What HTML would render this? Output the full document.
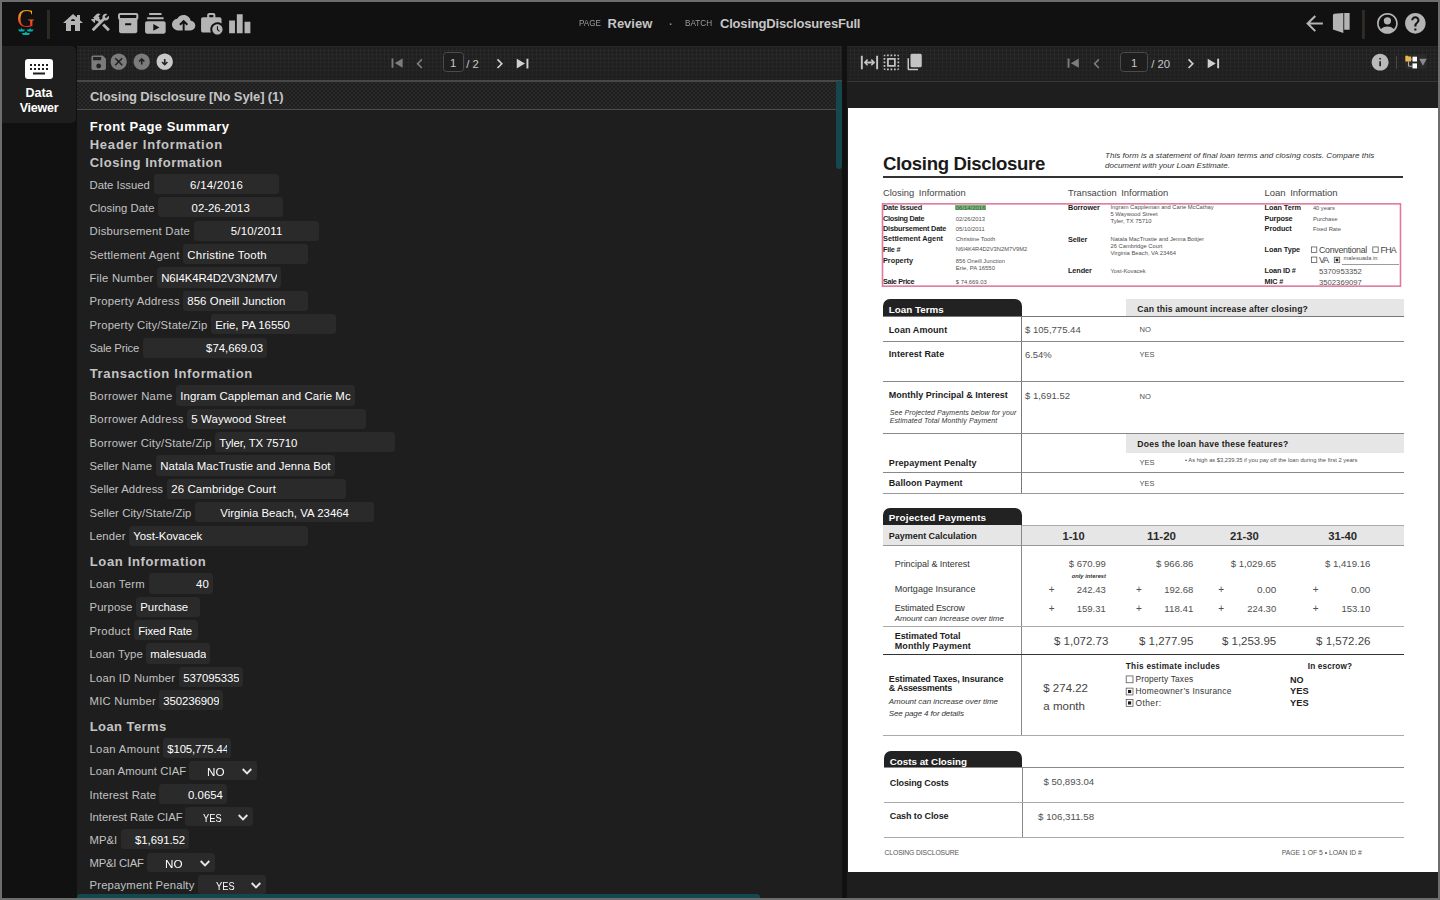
<!DOCTYPE html><html lang="en"><head><meta charset="utf-8"><title>Review - ClosingDisclosuresFull</title><style>
*{box-sizing:border-box;margin:0;padding:0}
html,body{width:1440px;height:900px;overflow:hidden;background:#6d6d6d;font-family:"Liberation Sans",sans-serif;}
#app{position:absolute;left:2px;top:2px;width:1436px;height:896px;background:#111;overflow:hidden}
.abs{position:absolute}
#topbar{position:absolute;left:0;top:0;width:1436px;height:44px;background:#111}
.ico{position:absolute;fill:#b4b4b4}
#logoG{position:absolute;left:15px;top:3px;font-family:"Liberation Serif",serif;font-size:24.600px;line-height:28px;background:linear-gradient(#f99d1c 28%,#ee1c25 82%);-webkit-background-clip:text;background-clip:text;color:transparent}
.tdiv{position:absolute;width:2px;background:#2b2722}
.ttxt{position:absolute;white-space:nowrap}
.tsm{font-size:9px;color:#9c9c9c}
.tbd{font-size:13px;font-weight:bold;color:#c6c6c6}
#side{position:absolute;left:0;top:44px;width:75px;height:852px;background:#111}
#tab{position:absolute;left:0;top:0;width:74px;height:77px;background:#1e1e1e;border-radius:0 5px 5px 0}
#tab .lbl{position:absolute;left:0;width:74px;text-align:center;color:#fff;font-weight:bold;font-size:12.5px;line-height:15px}
#left{position:absolute;left:75px;top:44px;width:765px;height:852px;background:#1e1e1e;overflow:hidden}
#right{position:absolute;left:845px;top:44px;width:591px;height:852px;background:#1e1e1e;overflow:hidden}
.tool{position:absolute;left:0;top:0;width:100%;height:35px;background-color:#1f1f1f;
 background-image:linear-gradient(rgba(30,30,30,0) 40%,rgba(30,30,30,.45)),linear-gradient(90deg,#282828 1px,transparent 1px),linear-gradient(#282828 1px,transparent 1px);
 background-size:100% 100%,4px 4px,4px 4px;background-position:0 0,3px 0,3px 0}
#left .tool{border-bottom:2px solid #474747;height:36px}
#right .tool{border-bottom:1px solid #363636;height:36px}
#sechead{position:absolute;left:0;top:36px;width:759px;height:28px;border-bottom:1px solid #4c4c4c;background-color:#292929;
 background-image:radial-gradient(circle at 1px 1px,#1f1f1f 1px,transparent 1.5px),radial-gradient(circle at 3px 3px,#1f1f1f 1px,transparent 1.5px);background-size:4px 4px;}
#sechead span{position:absolute;left:13px;top:6.500px;line-height:16px;font-size:13px;font-weight:bold;color:#c4c4c4;white-space:nowrap;letter-spacing:-.12px}
.h{position:absolute;font-weight:bold;color:#c4c4c4;white-space:nowrap}
.h.w{color:#fff}
.l{position:absolute;color:#c2c2c2;white-space:nowrap}
.i{position:absolute;background:#2a2a2a;border-radius:3.5px;color:#fff;font-size:11.400px;overflow:hidden}
.i .v{position:absolute;left:4.3px;right:4px;top:1px;height:20px;line-height:20px;white-space:nowrap;overflow:hidden}
.i span.v{right:auto}
.i.c{text-align:center}.i.r{text-align:right}
.i.s{text-align:left}
.chev{position:absolute;right:5px;top:6.600px;width:10px;height:7px}
.pgbox{position:absolute;border:1px solid #4b4b4b;border-radius:3.5px;color:#c8c8c8;font-size:11.300px;line-height:17.500px;padding-top:2.200px;text-align:center;background:#1e1e1e}
.pgt{position:absolute;font-size:11.300px;color:#c8c8c8;white-space:nowrap}
#vthumb{position:absolute;left:759px;top:34.800px;width:6px;height:88px;background:#16474f;border-radius:3px}
#hthumb{position:absolute;left:0;top:847.900px;width:683px;height:5px;background:#16474f;border-radius:3px 3px 0 0}
#divider{position:absolute;left:840px;top:44px;width:5px;height:852px;background:#111}
#doc{position:absolute;left:1px;top:61.75px;width:589.7px;height:764.4px;background:#fff;overflow:hidden;color:#222;font-family:"Liberation Sans",sans-serif}
#doc .t{position:absolute;white-space:pre;line-height:normal}
</style></head><body><div id="app">
<div id="topbar">
<div id="logoG">G</div>
<svg class="abs" style="left:15.8px;top:25.8px" width="16" height="7.400" viewBox="0 0 16 7.400"><g fill="#00b2a9"><path d="M0 1.400L2.600 1.400L3.600 0L4.600 1.400L7.200 1.400L5.800 3.400L1.400 3.400Z"/><path transform="translate(8.500 0)" d="M0 1.400L2.600 1.400L3.600 0L4.600 1.400L7.200 1.400L5.800 3.400L1.400 3.400Z"/><path transform="translate(3.600 3.300) scale(1.200 1.150)" d="M0 1.400L2.600 1.400L3.600 0L4.600 1.400L7.200 1.400L5.800 3.400L1.400 3.400Z"/></g></svg>
<div class="abs" style="left:45px;top:8px;width:3px;height:29px;background:linear-gradient(90deg,#2c2c2e 40%,#30290f)"></div>
<svg class="ico" style="left:59px;top:8.75px;fill:#b4b4b4" width="24" height="24" viewBox="0 0 24 24"><path d="M19 9.300V4h-3v2.600L12 3 2 12h3v8h5v-6h4v6h5v-8h3l-3-2.700zM10 10c0-1.100.900-2 2-2s2 .900 2 2h-4z"/></svg>
<svg class="ico" style="left:86.99px;top:9.02px;fill:#b4b4b4" width="22.91" height="22.91" viewBox="0 0 24 24"><path d="M13.78 15.17l2.12-2.12 6 6-2.12 2.12zM17.5 10c1.93 0 3.5-1.57 3.5-3.5 0-.58-.16-1.12-.41-1.6l-2.7 2.7-1.49-1.49 2.7-2.7c-.48-.25-1.02-.41-1.6-.41C15.57 3 14 4.57 14 6.5c0 .41.08.8.21 1.16l-1.85 1.85-1.78-1.78.71-.71-1.41-1.41L12 3.49c-1.17-1.17-3.07-1.17-4.24 0L4.22 7.03l1.41 1.41H2.81l-.71.71 3.54 3.54.71-.71V9.15l1.41 1.41.71-.71 1.78 1.78-7.41 7.41 2.12 2.12L16.34 9.79c.36.13.75.21 1.16.21z"/></svg>
<svg class="ico" style="left:113.97px;top:8.97px;fill:#b4b4b4" width="24.36" height="24.36" viewBox="0 0 24 24"><path d="M20 2H4c-1 0-2 .9-2 2v3.01c0 .72.43 1.34 1 1.69V20c0 1.1 1.1 2 2 2h14c.9 0 2-.9 2-2V8.7c.57-.35 1-.97 1-1.69V4c0-1.1-1-2-2-2zm-5 12H9v-2h6v2zm5-7H4V4h16v3z"/></svg>
<svg class="ico" style="left:141.34px;top:8.94px;fill:#b4b4b4" width="24.72" height="24.72" viewBox="0 0 24 24"><path d="M20 8H4V6h16v2zm-2-6H6v2h12V2zm4 10v8c0 1.1-.9 2-2 2H4c-1.1 0-2-.9-2-2v-8c0-1.1.9-2 2-2h16c1.1 0 2 .9 2 2zm-6 4l-6-3.27v6.53L16 16z"/></svg>
<svg class="ico" style="left:170.3px;top:9.32px;fill:#b4b4b4" width="23.3" height="23.3" viewBox="0 0 24 24"><path d="M19.35 10.04C18.67 6.59 15.64 4 12 4 9.11 4 6.6 5.64 5.35 8.04 2.34 8.36 0 10.91 0 14c0 3.31 2.69 6 6 6h5v-7.2l-2.1 2.1-1.4-1.4L12 9l4.5 4.5-1.4 1.4-2.1-2.1V20h6c2.76 0 5-2.24 5-5 0-2.64-2.05-4.78-4.65-4.96z"/></svg>
<svg class="ico" style="left:196.95px;top:8.95px;fill:#b4b4b4" width="24.57" height="24.57" viewBox="0 0 24 24"><path d="M18 11c1.49 0 2.87.47 4 1.26V8c0-1.11-.89-2-2-2h-4V4c0-1.11-.89-2-2-2h-4c-1.11 0-2 .89-2 2v2H4c-1.11 0-1.99.89-1.99 2L2 19c0 1.11.89 2 2 2h7.68A6.995 6.995 0 0 1 18 11zm-8-7h4v2h-4V4zM18 13c-2.76 0-5 2.24-5 5s2.24 5 5 5 5-2.24 5-5-2.24-5-5-5zm1.65 7.35L17.5 18.2V15h1v2.79l1.85 1.85-.7.71z"/></svg>
<svg class="ico" style="left:224.62px;top:8.56px;fill:#b4b4b4" width="25.5" height="25.5" viewBox="0 0 24 24"><path d="M7.5 21H2V9h5.5v12zm7.25-18h-5.5v18h5.5V3zM22 10h-5.5v11H22V10z"/></svg>
<div class="ttxt tsm" style="left:576.75px;top:13px;line-height:16px;font-size:9.600px;transform:scaleX(.843);transform-origin:0 50%">PAGE</div>
<div class="ttxt tbd" style="left:605.5px;top:13.5px;line-height:16px;">Review</div>
<div class="ttxt tsm" style="left:666.3px;top:13px;line-height:16px;font-size:14px;color:#9a9a9a">·</div>
<div class="ttxt tsm" style="left:683.2px;top:13px;line-height:16px;font-size:9.600px;transform:scaleX(.853);transform-origin:0 50%">BATCH</div>
<div class="ttxt tbd" style="left:718px;top:13.5px;line-height:16px;letter-spacing:-.19px">ClosingDisclosuresFull</div>
<svg class="ico" style="left:1299.83px;top:8.82px;fill:#b4b4b4" width="25.05" height="25.05" viewBox="0 0 24 24"><path d="M20 11H7.83l5.59-5.59L12 4l-8 8 8 8 1.41-1.41L7.83 13H20v-2z"/></svg>
<svg class="ico" style="left:1327.37px;top:8.54px;fill:#b4b4b4" width="23.58" height="23.58" viewBox="0 0 24 24"><path d="M4 4.400Q4 3 5.400 2.900L14.600 2V22.500L4 18.900zM15.500 2h5.500v17.200h-5.500z"/></svg>
<div class="abs" style="left:1360.4px;top:8px;width:2.8px;height:28.7px;background:linear-gradient(90deg,#2c2c2e 40%,#30290f)"></div>
<svg class="ico" style="left:1372.93px;top:8.73px;fill:#b4b4b4" width="24.84" height="24.84" viewBox="0 0 24 24"><path d="M12 2C6.480 2 2 6.480 2 12s4.480 10 10 10 10-4.480 10-10S17.520 2 12 2zM12 3.700a8.300 8.300 0 0 1 6.300 13.700C16.600 15.600 14.300 14.900 12 14.900s-4.600.700-6.300 2.500A8.300 8.300 0 0 1 12 3.700zM12 6a3.500 3.500 0 1 0 0 7 3.500 3.500 0 0 0 0-7z"/></svg>
<svg class="ico" style="left:1400.74px;top:8.74px;fill:#b4b4b4" width="24.72" height="24.72" viewBox="0 0 24 24"><path d="M12 2C6.48 2 2 6.48 2 12s4.48 10 10 10 10-4.48 10-10S17.52 2 12 2zm1 17h-2v-2h2v2zm2.07-7.75l-.9.92C13.45 12.9 13 13.5 13 15h-2v-.5c0-1.1.45-2.1 1.17-2.83l1.24-1.26c.37-.36.59-.86.59-1.41 0-1.1-.9-2-2-2s-2 .9-2 2H8c0-2.21 1.79-4 4-4s4 1.79 4 4c0 .88-.36 1.68-.93 2.25z"/></svg>
</div>
<div id="side"><div id="tab">
<svg class="abs" style="left:23px;top:13px" width="28" height="20" viewBox="0 0 28 20"><rect x="0" y="0" width="28" height="20" rx="3" fill="#fff"/><g fill="#1e1e1e"><rect x="5" y="5" width="2" height="2"/><rect x="9" y="5" width="2" height="2"/><rect x="13" y="5" width="2" height="2"/><rect x="17" y="5" width="2" height="2"/><rect x="21" y="5" width="2" height="2"/><rect x="5" y="9" width="2" height="2"/><rect x="9" y="9" width="2" height="2"/><rect x="13" y="9" width="2" height="2"/><rect x="17" y="9" width="2" height="2"/><rect x="21" y="9" width="2" height="2"/><rect x="8" y="13.500" width="12" height="2"/></g></svg>
<div class="lbl" style="top:39.500px">Data</div><div class="lbl" style="top:54.500px;letter-spacing:-.25px">Viewer</div>
</div></div>
<div id="left">
<div class="tool"></div>
<svg class="ico" style="left:12.33px;top:6.83px;fill:#7b7b7b" width="19.4" height="19.4" viewBox="0 0 24 24"><path d="M17 3H5c-1.11 0-2 .9-2 2v14c0 1.1.89 2 2 2h14c1.1 0 2-.9 2-2V7l-4-4zm-5 16c-1.66 0-3-1.34-3-3s1.34-3 3-3 3 1.34 3 3-1.34 3-3 3zm3-10H5V5h10v4z"/></svg>
<svg class="ico" style="left:32.38px;top:6.38px;fill:#7b7b7b" width="19.44" height="19.44" viewBox="0 0 24 24"><path d="M12 2C6.47 2 2 6.47 2 12s4.47 10 10 10 10-4.47 10-10S17.53 2 12 2zm5 13.59L15.59 17 12 13.41 8.41 17 7 15.59 10.59 12 7 8.41 8.41 7 12 10.59 15.59 7 17 8.41 13.41 12 17 15.59z"/></svg>
<svg class="ico" style="left:55.03px;top:6.38px;fill:#7b7b7b" width="19.44" height="19.44" viewBox="0 0 24 24"><path d="M12 22c5.52 0 10-4.48 10-10S17.52 2 12 2 2 6.48 2 12s4.48 10 10 10zm-1-6.5v-4.67L9.4 12.4 8 11l4-4 4 4-1.4 1.4-1.6-1.57v4.67h-2z"/></svg>
<svg class="ico" style="left:77.53px;top:6.38px;fill:#c9c9c9" width="19.44" height="19.44" viewBox="0 0 24 24"><path d="M12 2C6.48 2 2 6.48 2 12s4.48 10 10 10 10-4.48 10-10S17.52 2 12 2zm1 6.5v4.67l1.6-1.57L16 13l-4 4-4-4 1.4-1.4 1.6 1.57V8.5h2z"/></svg>
<svg class="ico" style="left:308.55px;top:5.93px;fill:#7d7d7d" width="22.2" height="22.2" viewBox="0 0 24 24"><path d="M6 7h2v10H6zm3.5 5l8.5 5V7z"/></svg>
<svg class="ico" style="left:332.52px;top:7.54px;fill:#7d7d7d" width="19.43" height="19.43" viewBox="0 0 24 24"><path d="M15.41 7.41L14 6l-6 6 6 6 1.41-1.41L10.83 12z"/></svg>
<div class="pgbox" style="left:366px;top:6px;width:20.5px;height:19.5px;">1</div>
<div class="pgt" style="left:389.3px;top:9.6px;line-height:16px;">/ 2</div>
<svg class="ico" style="left:412.64px;top:7.54px;fill:#d0d0d0" width="19.43" height="19.43" viewBox="0 0 24 24"><path d="M10 6L8.59 7.41 13.17 12l-4.58 4.59L10 18l6-6z"/></svg>
<svg class="ico" style="left:433.9px;top:5.63px;fill:#d0d0d0" width="23.2" height="23.2" viewBox="0 0 24 24"><path d="M16 7h2v10h-2zM6 17l8.5-5L6 7z"/></svg>
<div id="sechead"><span>Closing Disclosure [No Syle] (1)</span></div>
<div class="h w" style="left:12.7px;top:72.8px;line-height:15px;font-size:13px;letter-spacing:0.50px;">Front Page Summary</div>
<div class="h" style="left:12.7px;top:91px;line-height:15px;font-size:13px;letter-spacing:0.78px;">Header Information</div>
<div class="h" style="left:12.7px;top:109.2px;line-height:15px;font-size:13px;letter-spacing:0.53px;">Closing Information</div>
<div class="l" style="left:12.5px;top:132.8px;line-height:12px;font-size:11.3px;letter-spacing:0.00px;">Date Issued</div>
<div class="i" style="left:77px;top:128px;width:125px;height:20px;"><div class="v" style="text-align:center;letter-spacing:0.27px;">6/14/2016</div></div>
<div class="l" style="left:12.5px;top:155.8px;line-height:12px;font-size:11.3px;letter-spacing:0.03px;">Closing Date</div>
<div class="i" style="left:81px;top:151px;width:125px;height:20px;"><div class="v" style="text-align:center;letter-spacing:-0.01px;">02-26-2013</div></div>
<div class="l" style="left:12.5px;top:179px;line-height:12px;font-size:11.3px;letter-spacing:0.23px;">Disbursement Date</div>
<div class="i" style="left:117px;top:175px;width:125px;height:20px;"><div class="v" style="top:0;text-align:center;letter-spacing:0.21px;">5/10/2011</div></div>
<div class="l" style="left:12.5px;top:202.8px;line-height:12px;font-size:11.3px;letter-spacing:0.25px;">Settlement Agent</div>
<div class="i" style="left:106px;top:198px;width:125px;height:20px;"><div class="v" style="text-align:left;letter-spacing:0.26px;">Christine Tooth</div></div>
<div class="l" style="left:12.5px;top:225.8px;line-height:12px;font-size:11.3px;letter-spacing:0.22px;">File Number</div>
<div class="i" style="left:80px;top:221px;width:124px;height:20.6px;"><div class="v" style="text-align:left;letter-spacing:-0.15px;">N6I4K4R4D2V3N2M7V9M2</div></div>
<div class="l" style="left:12.5px;top:249px;line-height:12px;font-size:11.3px;letter-spacing:0.23px;">Property Address</div>
<div class="i" style="left:106px;top:245px;width:125px;height:20px;"><div class="v" style="top:0;text-align:left;letter-spacing:0.07px;">856 Oneill Junction</div></div>
<div class="l" style="left:12.5px;top:272.8px;line-height:12px;font-size:11.3px;letter-spacing:0.19px;">Property City/State/Zip</div>
<div class="i" style="left:134px;top:268px;width:125px;height:20px;"><div class="v" style="text-align:left;letter-spacing:-0.05px;">Erie, PA 16550</div></div>
<div class="l" style="left:12.5px;top:296.4px;line-height:12px;font-size:11.3px;letter-spacing:-0.18px;">Sale Price</div>
<div class="i" style="left:66px;top:291.6px;width:124px;height:20px;"><div class="v" style="top:0;text-align:right;letter-spacing:-0.01px;">$74,669.03</div></div>
<div class="h" style="left:12.7px;top:320px;line-height:15px;font-size:13px;letter-spacing:0.66px;">Transaction Information</div>
<div class="l" style="left:12.5px;top:343.8px;line-height:12px;font-size:11.3px;letter-spacing:0.30px;">Borrower Name</div>
<div class="i" style="left:99px;top:339px;width:179px;height:20.6px;"><div class="v" style="text-align:left;letter-spacing:0.09px;">Ingram Cappleman and Carie McCathay</div></div>
<div class="l" style="left:12.5px;top:367px;line-height:12px;font-size:11.3px;letter-spacing:0.28px;">Borrower Address</div>
<div class="i" style="left:110px;top:363px;width:179px;height:20px;"><div class="v" style="top:0;text-align:left;letter-spacing:0.11px;">5 Waywood Street</div></div>
<div class="l" style="left:12.5px;top:390.8px;line-height:12px;font-size:11.3px;letter-spacing:0.24px;">Borrower City/State/Zip</div>
<div class="i" style="left:138px;top:386px;width:180px;height:20px;"><div class="v" style="text-align:left;letter-spacing:-0.11px;">Tyler, TX 75710</div></div>
<div class="l" style="left:12.5px;top:413.8px;line-height:12px;font-size:11.3px;letter-spacing:0.03px;">Seller Name</div>
<div class="i" style="left:79px;top:409px;width:179px;height:20.6px;"><div class="v" style="text-align:left;letter-spacing:0.05px;">Natala MacTrustie and Jenna Bottjer</div></div>
<div class="l" style="left:12.5px;top:437px;line-height:12px;font-size:11.3px;letter-spacing:0.05px;">Seller Address</div>
<div class="i" style="left:90px;top:433px;width:179px;height:20px;"><div class="v" style="top:0;text-align:left;letter-spacing:0.12px;">26 Cambridge Court</div></div>
<div class="l" style="left:12.5px;top:460.8px;line-height:12px;font-size:11.3px;letter-spacing:0.10px;">Seller City/State/Zip</div>
<div class="i" style="left:118px;top:456px;width:179px;height:20px;"><div class="v" style="text-align:center;letter-spacing:0.02px;">Virginia Beach, VA 23464</div></div>
<div class="l" style="left:12.5px;top:484px;line-height:12px;font-size:11.3px;letter-spacing:0.15px;">Lender</div>
<div class="i" style="left:52px;top:480px;width:179px;height:20px;"><div class="v" style="top:0;text-align:left;letter-spacing:-0.03px;">Yost-Kovacek</div></div>
<div class="h" style="left:12.7px;top:508.4px;line-height:15px;font-size:13px;letter-spacing:0.66px;">Loan Information</div>
<div class="l" style="left:12.5px;top:531.8px;line-height:12px;font-size:11.3px;letter-spacing:0.24px;">Loan Term</div>
<div class="i" style="left:72px;top:527px;width:64px;height:20.6px;"><div class="v" style="text-align:right;letter-spacing:0.16px;">40</div></div>
<div class="l" style="left:12.5px;top:555.4px;line-height:12px;font-size:11.3px;letter-spacing:0.13px;">Purpose</div>
<div class="i" style="left:59px;top:550.6px;width:64px;height:20px;"><div class="v" style="top:0;text-align:left;letter-spacing:-0.04px;">Purchase</div></div>
<div class="l" style="left:12.5px;top:578.8px;line-height:12px;font-size:11.3px;letter-spacing:0.27px;">Product</div>
<div class="i" style="left:57px;top:574px;width:64px;height:20px;"><div class="v" style="text-align:left;letter-spacing:-0.15px;">Fixed Rate</div></div>
<div class="l" style="left:12.5px;top:601.8px;line-height:12px;font-size:11.3px;letter-spacing:0.08px;">Loan Type</div>
<div class="i" style="left:69px;top:597px;width:64px;height:20.6px;"><div class="v" style="text-align:left;letter-spacing:0.05px;">malesuada in</div></div>
<div class="l" style="left:12.5px;top:625.8px;line-height:12px;font-size:11.3px;letter-spacing:0.21px;">Loan ID Number</div>
<div class="i" style="left:102px;top:621px;width:64px;height:20px;"><div class="v" style="text-align:left;letter-spacing:-0.10px;">5370953352</div></div>
<div class="l" style="left:12.5px;top:648.8px;line-height:12px;font-size:11.3px;letter-spacing:0.24px;">MIC Number</div>
<div class="i" style="left:82px;top:644px;width:64px;height:20px;"><div class="v" style="text-align:left;letter-spacing:-0.10px;">3502369097</div></div>
<div class="h" style="left:12.7px;top:673px;line-height:15px;font-size:13px;letter-spacing:0.43px;">Loan Terms</div>
<div class="l" style="left:12.5px;top:696.8px;line-height:12px;font-size:11.3px;letter-spacing:0.34px;">Loan Amount</div>
<div class="i" style="left:86px;top:692px;width:68px;height:20px;"><div class="v" style="text-align:left;letter-spacing:-0.16px;">$105,775.44</div></div>
<div class="l" style="left:12.5px;top:718.8px;line-height:12px;font-size:11.3px;letter-spacing:0.08px;">Loan Amount CIAF</div>
<div class="i" style="left:112px;top:715px;width:68px;height:19px;"><span class="v" style="left:18px;transform:scaleX(1.024);transform-origin:0 50%;">NO</span><svg class="chev" viewBox="0 0 10 7"><path d="M.7 1l4.300 4.300L9.300 1" fill="none" stroke="#e6e6e6" stroke-width="1.900"/></svg></div>
<div class="l" style="left:12.5px;top:742.8px;line-height:12px;font-size:11.3px;letter-spacing:0.15px;">Interest Rate</div>
<div class="i" style="left:82px;top:738px;width:68px;height:20px;"><div class="v" style="text-align:right;letter-spacing:0.03px;">0.0654</div></div>
<div class="l" style="left:12.5px;top:764.8px;line-height:12px;font-size:11.3px;letter-spacing:-0.03px;">Interest Rate CIAF</div>
<div class="i" style="left:108px;top:761px;width:68px;height:19px;"><span class="v" style="left:18px;transform:scaleX(0.816);transform-origin:0 50%;">YES</span><svg class="chev" viewBox="0 0 10 7"><path d="M.7 1l4.300 4.300L9.300 1" fill="none" stroke="#e6e6e6" stroke-width="1.900"/></svg></div>
<div class="l" style="left:12.5px;top:788.2px;line-height:12px;font-size:11.3px;letter-spacing:0.04px;">MP&amp;I</div>
<div class="i" style="left:44px;top:783.4px;width:68px;height:20px;"><div class="v" style="text-align:right;letter-spacing:-0.08px;">$1,691.52</div></div>
<div class="l" style="left:12.5px;top:810.8px;line-height:12px;font-size:11.3px;letter-spacing:-0.26px;">MP&amp;I CIAF</div>
<div class="i" style="left:70px;top:807px;width:68px;height:19px;"><span class="v" style="left:18px;transform:scaleX(1.024);transform-origin:0 50%;">NO</span><svg class="chev" viewBox="0 0 10 7"><path d="M.7 1l4.300 4.300L9.300 1" fill="none" stroke="#e6e6e6" stroke-width="1.900"/></svg></div>
<div class="l" style="left:12.5px;top:832.8px;line-height:12px;font-size:11.3px;letter-spacing:0.18px;">Prepayment Penalty</div>
<div class="i" style="left:121px;top:829px;width:68px;height:19px;"><span class="v" style="left:18px;transform:scaleX(0.816);transform-origin:0 50%;">YES</span><svg class="chev" viewBox="0 0 10 7"><path d="M.7 1l4.300 4.300L9.300 1" fill="none" stroke="#e6e6e6" stroke-width="1.900"/></svg></div>
<div id="vthumb"></div><div id="hthumb"></div>
</div>
<div id="divider"></div>
<div id="right">
<div class="tool"></div>
<svg class="ico" style="left:10.93px;top:5.22px;fill:#c4c4c4" width="22.93" height="22.93" viewBox="0 0 24 24"><path d="M3 5h2v14H3zM19 5h2v14h-2zM9.5 8.5L6 12l3.5 3.5 1.1-1.1L9.2 13h5.6l-1.4 1.4 1.1 1.1L18 12l-3.5-3.5-1.1 1.1 1.4 1.4H9.2l1.4-1.4z"/></svg>
<svg class="ico" style="left:34.4px;top:6.2px;fill:#c4c4c4" width="20.8" height="20.8" viewBox="0 0 24 24"><path d="M3 5h2V3c-1.1 0-2 .9-2 2zm0 8h2v-2H3v2zm4 8h2v-2H7v2zM3 9h2V7H3v2zm10-6h-2v2h2V3zm6 0v2h2c0-1.1-.9-2-2-2zM5 21v-2H3c0 1.1.9 2 2 2zm-2-4h2v-2H3v2zM9 3H7v2h2V3zm2 18h2v-2h-2v2zm8-8h2v-2h-2v2zm0 8c1.1 0 2-.9 2-2h-2v2zm0-12h2V7h-2v2zm0 8h2v-2h-2v2zm-4 4h2v-2h-2v2zm0-16h2V3h-2v2zM7 17h10V7H7v10zm2-8h6v6H9V9z"/></svg>
<svg class="ico" style="left:58.5px;top:7.25px;fill:#c4c4c4" width="18" height="18" viewBox="0 0 24 24"><path d="M16 23H4c-1.100 0-2-.900-2-2V7h2v14h12v2zm3-4H8c-1.100 0-2-.900-2-2V3c0-1.100.900-2 2-2h11c1.100 0 2 .900 2 2v14c0 1.100-.900 2-2 2z"/></svg>
<svg class="ico" style="left:215.1px;top:5.87px;fill:#7d7d7d" width="22.4" height="22.4" viewBox="0 0 24 24"><path d="M6 7h2v10H6zm3.5 5l8.5 5V7z"/></svg>
<svg class="ico" style="left:239.52px;top:7.54px;fill:#7d7d7d" width="19.43" height="19.43" viewBox="0 0 24 24"><path d="M15.41 7.41L14 6l-6 6 6 6 1.41-1.41L10.83 12z"/></svg>
<div class="pgbox" style="left:273.2px;top:6.3px;width:27.8px;height:19.4px;">1</div>
<div class="pgt" style="left:304.3px;top:9.6px;line-height:16px;">/ 20</div>
<svg class="ico" style="left:333.84px;top:7.54px;fill:#d0d0d0" width="19.43" height="19.43" viewBox="0 0 24 24"><path d="M10 6L8.59 7.41 13.17 12l-4.58 4.59L10 18l6-6z"/></svg>
<svg class="ico" style="left:355.3px;top:5.75px;fill:#d0d0d0" width="22.8" height="22.8" viewBox="0 0 24 24"><path d="M16 7h2v10h-2zM6 17l8.5-5L6 7z"/></svg>
<svg class="ico" style="left:523.31px;top:6.31px;fill:#bababa" width="20.28" height="20.28" viewBox="0 0 24 24"><path d="M12 2C6.48 2 2 6.48 2 12s4.48 10 10 10 10-4.48 10-10S17.52 2 12 2zm1 15h-2v-6h2v6zm0-8h-2V7h2v2z"/></svg>
<div class="abs" style="left:548.6px;top:10px;width:1.2px;height:13px;background:#4a4a40"></div>
<div class="abs" style="left:558px;top:8.3px;width:21.7px;height:14.7px;background:#2a2a2a;border-radius:3px"></div>
<svg class="abs" style="left:558px;top:8.299999999999997px" width="22" height="15" viewBox="0 0 22 15"><path d="M.3 1.700h2.500l.8.900h2.500v4.900H.3z" fill="#e8b84a"/><path d="M3.500 7.500v4.700h4M6 5.200h1.500" fill="none" stroke="#cfcfcf" stroke-width=".8"/><rect x="7.500" y="2.700" width="4.500" height="4.800" fill="#fff"/><rect x="7.500" y="9.400" width="4.500" height="5" fill="#fff"/><path d="M14.200 4.700h7.500l-3.750 7z" fill="#8a8a8a"/></svg>
<div id="doc">
<div class="abs" style="left:35px;top:68.65px;width:520.2px;height:1.8px;background:#333"></div>
<div class="abs" style="left:107.3px;top:97.25px;width:30.5px;height:5.4px;background:#6cc070"></div>
<div class="abs" style="left:493.5px;top:155.85px;width:57.5px;height:0.8px;background:#9c9c9c"></div>
<div class="abs" style="left:35px;top:191.45px;width:138.7px;height:17.3px;background:#222;border-radius:7px 7px 0 0"></div>
<div class="abs" style="left:277.9px;top:191.55px;width:277.7px;height:17px;background:#e6e6e6"></div>
<div class="abs" style="left:35px;top:208.05px;width:520.6px;height:1px;background:#777"></div>
<div class="abs" style="left:173px;top:208.25px;width:1px;height:177.7px;background:#777"></div>
<div class="abs" style="left:35px;top:232.95px;width:520.6px;height:1px;background:#888"></div>
<div class="abs" style="left:35px;top:273.05px;width:520.6px;height:1px;background:#888"></div>
<div class="abs" style="left:35px;top:325.45px;width:520.6px;height:1px;background:#888"></div>
<div class="abs" style="left:277.9px;top:326.45px;width:277.7px;height:18.5px;background:#e6e6e6"></div>
<div class="abs" style="left:35px;top:364.25px;width:520.6px;height:1px;background:#888"></div>
<div class="abs" style="left:35px;top:385.45px;width:520.6px;height:1px;background:#999"></div>
<div class="abs" style="left:35px;top:417.25px;width:520.8px;height:20.4px;background:#e6e6e6"></div>
<div class="abs" style="left:35px;top:399.75px;width:138.7px;height:17.8px;background:#222;border-radius:7px 7px 0 0"></div>
<div class="abs" style="left:173.7px;top:416.75px;width:382.1px;height:1px;background:#aaa"></div>
<div class="abs" style="left:35px;top:437.15px;width:520.8px;height:1px;background:#999"></div>
<div class="abs" style="left:173.2px;top:417.25px;width:1px;height:210.8px;background:#888"></div>
<div class="abs" style="left:35px;top:517.75px;width:520.8px;height:1px;background:#aaa"></div>
<div class="abs" style="left:35px;top:546.05px;width:520.8px;height:1.6px;background:#333"></div>
<div class="abs" style="left:35px;top:627.55px;width:520.8px;height:1px;background:#aaa"></div>
<div class="abs" style="left:35.5px;top:643.45px;width:138.5px;height:17px;background:#222;border-radius:7px 7px 0 0"></div>
<div class="abs" style="left:35.5px;top:659.65px;width:520.7px;height:1px;background:#888"></div>
<div class="abs" style="left:173.5px;top:660.15px;width:1px;height:69.6px;background:#888"></div>
<div class="abs" style="left:35.5px;top:694.45px;width:520.7px;height:1px;background:#aaa"></div>
<div class="abs" style="left:35.5px;top:729.25px;width:520.7px;height:1px;background:#aaa"></div>
<svg class="abs" style="left:0;top:0" width="589.7" height="764.4" viewBox="0 0 589.7 764.4"><rect x="34.5" y="95.85" width="518" height="82.3" fill="none" stroke="#e07a9c" stroke-width="1.6"/><rect x="463.4" y="138.95" width="5.4" height="5.4" fill="none" stroke="#5a5a5a" stroke-width=".8"/><rect x="524.8" y="138.95" width="5.4" height="5.4" fill="none" stroke="#5a5a5a" stroke-width=".8"/><rect x="463.4" y="149.05" width="5.4" height="5.4" fill="none" stroke="#5a5a5a" stroke-width=".8"/><rect x="486.3" y="149.25" width="5.4" height="5.4" fill="none" stroke="#5a5a5a" stroke-width=".8"/><rect x="487.7" y="150.65" width="2.6" height="2.6" fill="#1a1a1a"/><rect x="278.2" y="567.95" width="6.8" height="6.8" fill="none" stroke="#5a5a5a" stroke-width=".8"/><rect x="278.2" y="580.15" width="6.8" height="6.8" fill="none" stroke="#5a5a5a" stroke-width=".8"/><rect x="280" y="581.95" width="3.19" height="3.19" fill="#1a1a1a"/><rect x="278.2" y="591.55" width="6.8" height="6.8" fill="none" stroke="#5a5a5a" stroke-width=".8"/><rect x="280" y="593.35" width="3.19" height="3.19" fill="#1a1a1a"/></svg>
<span class="t" style="left:35px;top:45.45px;font-size:18.6px;line-height:21px;color:#1a1a1a;font-weight:bold;letter-spacing:-0.36px;">Closing Disclosure</span>
<span class="t" style="left:257px;top:43.55px;font-size:8px;line-height:9px;color:#333;font-style:italic;letter-spacing:0.04px;">This form is a statement of final loan terms and closing costs. Compare this</span>
<span class="t" style="left:257px;top:53.35px;font-size:8px;line-height:9px;color:#333;font-style:italic;">document with your Loan Estimate.</span>
<span class="t" style="left:35px;top:80.55px;font-size:9.39px;line-height:10px;color:#444;word-spacing:2px;">Closing Information</span>
<span class="t" style="left:220px;top:80.55px;font-size:9.39px;line-height:10px;color:#444;word-spacing:2px;">Transaction Information</span>
<span class="t" style="left:416.5px;top:79.55px;font-size:9.47px;line-height:11px;color:#444;word-spacing:2px;">Loan Information</span>
<span class="t" style="left:35px;top:94.95px;font-size:7.3px;line-height:9px;color:#1c1c1c;font-weight:bold;letter-spacing:-0.18px;">Date Issued</span>
<span class="t" style="left:35px;top:105.75px;font-size:7.3px;line-height:9px;color:#1c1c1c;font-weight:bold;letter-spacing:-0.28px;">Closing Date</span>
<span class="t" style="left:35px;top:116.05px;font-size:7.3px;line-height:9px;color:#1c1c1c;font-weight:bold;letter-spacing:-0.2px;">Disbursement Date</span>
<span class="t" style="left:35px;top:126.55px;font-size:7.3px;line-height:9px;color:#1c1c1c;font-weight:bold;letter-spacing:0.02px;">Settlement Agent</span>
<span class="t" style="left:35px;top:137.25px;font-size:7.3px;line-height:9px;color:#1c1c1c;font-weight:bold;letter-spacing:-0.23px;">File #</span>
<span class="t" style="left:35px;top:148.05px;font-size:7.3px;line-height:9px;color:#1c1c1c;font-weight:bold;">Property</span>
<span class="t" style="left:35px;top:169.05px;font-size:7.3px;line-height:9px;color:#1c1c1c;font-weight:bold;letter-spacing:-0.37px;">Sale Price</span>
<span class="t" style="left:107.8px;top:97.15px;font-size:5.93px;line-height:6px;color:#505050;">06/14/2016</span>
<span class="t" style="left:107.8px;top:108.15px;font-size:5.83px;line-height:6px;color:#505050;">02/26/2013</span>
<span class="t" style="left:107.8px;top:118.45px;font-size:5.86px;line-height:6px;color:#505050;">05/10/2011</span>
<span class="t" style="left:107.8px;top:128.25px;font-size:5.94px;line-height:6px;color:#505050;">Christine Tooth</span>
<span class="t" style="left:107.8px;top:138.45px;font-size:5.78px;line-height:6px;color:#505050;">N6I4K4R4D2V3N2M7V9M2</span>
<span class="t" style="left:107.8px;top:150.45px;font-size:5.78px;line-height:6px;color:#505050;">856 Oneill Junction</span>
<span class="t" style="left:107.8px;top:157.45px;font-size:5.94px;line-height:6px;color:#505050;">Erie, PA 16550</span>
<span class="t" style="left:107.8px;top:171.15px;font-size:5.85px;line-height:6px;color:#505050;">$ 74,669.03</span>
<span class="t" style="left:220px;top:94.95px;font-size:7.3px;line-height:9px;color:#1c1c1c;font-weight:bold;letter-spacing:-0.09px;">Borrower</span>
<span class="t" style="left:220px;top:126.75px;font-size:7.3px;line-height:9px;color:#1c1c1c;font-weight:bold;letter-spacing:-0.12px;">Seller</span>
<span class="t" style="left:220px;top:158.25px;font-size:7.3px;line-height:9px;color:#1c1c1c;font-weight:bold;letter-spacing:-0.1px;">Lender</span>
<span class="t" style="left:262.5px;top:96.45px;font-size:5.77px;line-height:6px;color:#505050;">Ingram Cappleman and Carie McCathay</span>
<span class="t" style="left:262.5px;top:102.95px;font-size:5.81px;line-height:6px;color:#505050;">5 Waywood Street</span>
<span class="t" style="left:262.5px;top:109.75px;font-size:5.9px;line-height:6px;color:#505050;">Tyler, TX 75710</span>
<span class="t" style="left:262.5px;top:128.65px;font-size:5.77px;line-height:6px;color:#505050;">Natala MacTrustie and Jenna Bottjer</span>
<span class="t" style="left:262.5px;top:135.15px;font-size:5.77px;line-height:6px;color:#505050;">26 Cambridge Court</span>
<span class="t" style="left:262.5px;top:142.05px;font-size:5.82px;line-height:6px;color:#505050;">Virginia Beach, VA 23464</span>
<span class="t" style="left:262.5px;top:160.45px;font-size:5.81px;line-height:6px;color:#505050;">Yost-Kovacek</span>
<span class="t" style="left:416.6px;top:94.95px;font-size:7.3px;line-height:9px;color:#1c1c1c;font-weight:bold;letter-spacing:-0.04px;">Loan Term</span>
<span class="t" style="left:416.6px;top:105.75px;font-size:7.3px;line-height:9px;color:#1c1c1c;font-weight:bold;letter-spacing:-0.2px;">Purpose</span>
<span class="t" style="left:416.6px;top:116.05px;font-size:7.3px;line-height:9px;color:#1c1c1c;font-weight:bold;letter-spacing:-0.08px;">Product</span>
<span class="t" style="left:416.6px;top:137.45px;font-size:7.3px;line-height:9px;color:#1c1c1c;font-weight:bold;letter-spacing:-0.05px;">Loan Type</span>
<span class="t" style="left:416.6px;top:158.55px;font-size:7.3px;line-height:9px;color:#1c1c1c;font-weight:bold;letter-spacing:-0.2px;">Loan ID #</span>
<span class="t" style="left:416.6px;top:169.05px;font-size:7.3px;line-height:9px;color:#1c1c1c;font-weight:bold;letter-spacing:-0.17px;">MIC #</span>
<span class="t" style="left:464.9px;top:97.35px;font-size:5.74px;line-height:6px;color:#505050;">40 years</span>
<span class="t" style="left:464.9px;top:107.85px;font-size:5.84px;line-height:6px;color:#505050;">Purchase</span>
<span class="t" style="left:464.9px;top:118.15px;font-size:5.79px;line-height:6px;color:#505050;">Fixed Rate</span>
<span class="t" style="left:471px;top:136.75px;font-size:8.8px;line-height:10px;color:#444;letter-spacing:-0.28px;">Conventional</span>
<span class="t" style="left:532.5px;top:136.75px;font-size:8.8px;line-height:10px;color:#444;letter-spacing:-0.7px;">FHA</span>
<span class="t" style="left:471px;top:146.75px;font-size:8.8px;line-height:10px;color:#444;letter-spacing:-0.9px;">VA</span>
<span class="t" style="left:495.6px;top:147.55px;font-size:5.7px;line-height:6px;color:#505050;">malesuada in</span>
<span class="t" style="left:471px;top:159.65px;font-size:7.69px;line-height:9px;color:#505050;">5370953352</span>
<span class="t" style="left:471px;top:170.35px;font-size:7.69px;line-height:9px;color:#505050;">3502369097</span>
<span class="t" style="left:40.8px;top:195.75px;font-size:9.8px;line-height:11px;color:#fff;font-weight:bold;letter-spacing:0.02px;">Loan Terms</span>
<span class="t" style="left:289.3px;top:196.45px;font-size:8.6px;line-height:10px;color:#1c1c1c;font-weight:bold;letter-spacing:0.19px;">Can this amount increase after closing?</span>
<span class="t" style="left:40.8px;top:216.75px;font-size:9px;line-height:10px;color:#1c1c1c;font-weight:bold;letter-spacing:0.07px;">Loan Amount</span>
<span class="t" style="left:177px;top:215.75px;font-size:9.56px;line-height:11px;color:#505050;">$ 105,775.44</span>
<span class="t" style="left:291.6px;top:216.75px;font-size:7.6px;line-height:9px;color:#505050;">NO</span>
<span class="t" style="left:40.8px;top:241.25px;font-size:9px;line-height:10px;color:#1c1c1c;font-weight:bold;letter-spacing:0.07px;">Interest Rate</span>
<span class="t" style="left:177px;top:241.25px;font-size:9.42px;line-height:11px;color:#505050;">6.54%</span>
<span class="t" style="left:291.6px;top:242.45px;font-size:7.49px;line-height:9px;color:#505050;">YES</span>
<span class="t" style="left:40.8px;top:281.75px;font-size:9px;line-height:10px;color:#1c1c1c;font-weight:bold;">Monthly Principal &amp; Interest</span>
<span class="t" style="left:177px;top:282.05px;font-size:9.52px;line-height:11px;color:#505050;">$ 1,691.52</span>
<span class="t" style="left:291.6px;top:283.75px;font-size:7.6px;line-height:9px;color:#505050;">NO</span>
<span class="t" style="left:41.7px;top:301.25px;font-size:7px;line-height:7px;color:#333;font-style:italic;letter-spacing:0.1px;">See Projected Payments below for your</span>
<span class="t" style="left:41.7px;top:309.55px;font-size:7px;line-height:7px;color:#333;font-style:italic;letter-spacing:0.12px;">Estimated Total Monthly Payment</span>
<span class="t" style="left:289.3px;top:331.05px;font-size:8.6px;line-height:10px;color:#1c1c1c;font-weight:bold;letter-spacing:0.2px;">Does the loan have these features?</span>
<span class="t" style="left:40.8px;top:350.05px;font-size:9px;line-height:10px;color:#1c1c1c;font-weight:bold;letter-spacing:0.1px;">Prepayment Penalty</span>
<span class="t" style="left:291.6px;top:350.25px;font-size:7.49px;line-height:9px;color:#505050;">YES</span>
<span class="t" style="left:337px;top:349.55px;font-size:5.78px;line-height:6px;color:#505050;">• As high as $3,239.35 if you pay off the loan during the first 2 years</span>
<span class="t" style="left:40.8px;top:370.05px;font-size:9px;line-height:10px;color:#1c1c1c;font-weight:bold;letter-spacing:0.05px;">Balloon Payment</span>
<span class="t" style="left:291.6px;top:370.85px;font-size:7.49px;line-height:9px;color:#505050;">YES</span>
<span class="t" style="left:40.8px;top:404.55px;font-size:9.9px;line-height:11px;color:#fff;font-weight:bold;letter-spacing:0.17px;">Projected Payments</span>
<span class="t" style="left:40.8px;top:423.05px;font-size:9px;line-height:10px;color:#1c1c1c;font-weight:bold;letter-spacing:-0.03px;">Payment Calculation</span>
<span class="t" style="left:214.5px;top:421.95px;font-size:11.1px;line-height:12px;color:#2a2a2a;font-weight:bold;">1-10</span>
<span class="t" style="left:299.1px;top:421.95px;font-size:11.55px;line-height:12px;color:#2a2a2a;font-weight:bold;">11-20</span>
<span class="t" style="left:382px;top:421.95px;font-size:11.3px;line-height:12px;color:#2a2a2a;font-weight:bold;">21-30</span>
<span class="t" style="left:480.2px;top:421.95px;font-size:11.3px;line-height:12px;color:#2a2a2a;font-weight:bold;">31-40</span>
<span class="t" style="left:46.7px;top:451.25px;font-size:9px;line-height:10px;color:#333;letter-spacing:-0.03px;">Principal &amp; Interest</span>
<span class="t" style="left:220.8px;top:450.55px;font-size:9.51px;line-height:11px;color:#505050;">$ 670.99</span>
<span class="t" style="left:308px;top:450.55px;font-size:9.58px;line-height:11px;color:#505050;">$ 966.86</span>
<span class="t" style="left:382.7px;top:450.55px;font-size:9.63px;line-height:11px;color:#505050;">$ 1,029.65</span>
<span class="t" style="left:476.9px;top:450.55px;font-size:9.63px;line-height:11px;color:#505050;">$ 1,419.16</span>
<span class="t" style="left:223.7px;top:464.85px;font-size:5.78px;line-height:6px;color:#333;font-weight:bold;font-style:italic;">only interest</span>
<span class="t" style="left:46.7px;top:476.45px;font-size:9px;line-height:10px;color:#333;letter-spacing:0.04px;">Mortgage Insurance</span>
<span class="t" style="left:46.7px;top:494.75px;font-size:9px;line-height:10px;color:#333;letter-spacing:-0.13px;">Estimated Escrow</span>
<span class="t" style="left:46.7px;top:505.75px;font-size:8px;line-height:9px;color:#333;font-style:italic;letter-spacing:-0.04px;">Amount can increase over time</span>
<span class="t" style="left:200.7px;top:476.05px;font-size:10px;line-height:11px;color:#505050;">+</span>
<span class="t" style="left:200.7px;top:495.25px;font-size:10px;line-height:11px;color:#505050;">+</span>
<span class="t" style="left:288px;top:476.05px;font-size:10px;line-height:11px;color:#505050;">+</span>
<span class="t" style="left:288px;top:495.25px;font-size:10px;line-height:11px;color:#505050;">+</span>
<span class="t" style="left:370.2px;top:476.05px;font-size:10px;line-height:11px;color:#505050;">+</span>
<span class="t" style="left:370.2px;top:495.25px;font-size:10px;line-height:11px;color:#505050;">+</span>
<span class="t" style="left:464.7px;top:476.05px;font-size:10px;line-height:11px;color:#505050;">+</span>
<span class="t" style="left:464.7px;top:495.25px;font-size:10px;line-height:11px;color:#505050;">+</span>
<span class="t" style="left:228.8px;top:475.75px;font-size:9.48px;line-height:11px;color:#505050;">242.43</span>
<span class="t" style="left:316.3px;top:475.75px;font-size:9.48px;line-height:11px;color:#505050;">192.68</span>
<span class="t" style="left:408.9px;top:475.75px;font-size:9.92px;line-height:11px;color:#505050;">0.00</span>
<span class="t" style="left:503.1px;top:475.75px;font-size:9.92px;line-height:11px;color:#505050;">0.00</span>
<span class="t" style="left:228.8px;top:494.95px;font-size:9.48px;line-height:11px;color:#505050;">159.31</span>
<span class="t" style="left:316.3px;top:494.95px;font-size:9.72px;line-height:11px;color:#505050;">118.41</span>
<span class="t" style="left:399.2px;top:494.95px;font-size:9.48px;line-height:11px;color:#505050;">224.30</span>
<span class="t" style="left:493.4px;top:494.95px;font-size:9.48px;line-height:11px;color:#505050;">153.10</span>
<span class="t" style="left:46.7px;top:522.95px;font-size:9px;line-height:10px;color:#1c1c1c;font-weight:bold;letter-spacing:-0.04px;">Estimated Total</span>
<span class="t" style="left:46.7px;top:532.95px;font-size:9px;line-height:10px;color:#1c1c1c;font-weight:bold;letter-spacing:0.11px;">Monthly Payment</span>
<span class="t" style="left:206px;top:526.95px;font-size:11.5px;line-height:12px;color:#444;">$ 1,072.73</span>
<span class="t" style="left:291px;top:526.95px;font-size:11.5px;line-height:12px;color:#444;">$ 1,277.95</span>
<span class="t" style="left:373.9px;top:526.95px;font-size:11.5px;line-height:12px;color:#444;">$ 1,253.95</span>
<span class="t" style="left:468.1px;top:526.95px;font-size:11.5px;line-height:12px;color:#444;">$ 1,572.26</span>
<span class="t" style="left:40.8px;top:565.95px;font-size:9px;line-height:10px;color:#1c1c1c;font-weight:bold;letter-spacing:-0.13px;">Estimated Taxes, Insurance</span>
<span class="t" style="left:40.8px;top:575.45px;font-size:9px;line-height:10px;color:#1c1c1c;font-weight:bold;letter-spacing:-0.27px;">&amp; Assessments</span>
<span class="t" style="left:40.8px;top:588.95px;font-size:8px;line-height:9px;color:#333;font-style:italic;letter-spacing:-0.04px;">Amount can increase over time</span>
<span class="t" style="left:40.8px;top:601.05px;font-size:8px;line-height:9px;color:#333;font-style:italic;letter-spacing:-0.13px;">See page 4 for details</span>
<span class="t" style="left:195.3px;top:574.45px;font-size:11.49px;line-height:12px;color:#444;">$ 274.22</span>
<span class="t" style="left:195.3px;top:591.95px;font-size:11.54px;line-height:12px;color:#444;">a month</span>
<span class="t" style="left:277.8px;top:553.85px;font-size:8.2px;line-height:9px;color:#1c1c1c;font-weight:bold;letter-spacing:0.3px;">This estimate includes</span>
<span class="t" style="left:459.8px;top:553.85px;font-size:8.2px;line-height:9px;color:#1c1c1c;font-weight:bold;letter-spacing:0.16px;">In escrow?</span>
<span class="t" style="left:287.5px;top:566.45px;font-size:8.4px;line-height:10px;color:#333;letter-spacing:0.15px;">Property Taxes</span>
<span class="t" style="left:442px;top:567.25px;font-size:9.03px;line-height:10px;color:#222;font-weight:bold;">NO</span>
<span class="t" style="left:287.5px;top:578.65px;font-size:8.4px;line-height:10px;color:#333;letter-spacing:0.27px;">Homeowner’s Insurance</span>
<span class="t" style="left:442px;top:578.65px;font-size:9.32px;line-height:10px;color:#222;font-weight:bold;">YES</span>
<span class="t" style="left:287.5px;top:590.05px;font-size:8.4px;line-height:10px;color:#333;letter-spacing:0.44px;">Other:</span>
<span class="t" style="left:442px;top:589.85px;font-size:9.32px;line-height:10px;color:#222;font-weight:bold;">YES</span>
<span class="t" style="left:41.8px;top:648.05px;font-size:9.8px;line-height:11px;color:#fff;font-weight:bold;letter-spacing:-0.01px;">Costs at Closing</span>
<span class="t" style="left:41.8px;top:669.85px;font-size:9px;line-height:10px;color:#1c1c1c;font-weight:bold;letter-spacing:-0.12px;">Closing Costs</span>
<span class="t" style="left:195.5px;top:668.25px;font-size:9.58px;line-height:11px;color:#505050;">$ 50,893.04</span>
<span class="t" style="left:41.8px;top:703.25px;font-size:9px;line-height:10px;color:#1c1c1c;font-weight:bold;letter-spacing:-0.1px;">Cash to Close</span>
<span class="t" style="left:190.1px;top:703.25px;font-size:9.72px;line-height:11px;color:#505050;">$ 106,311.58</span>
<span class="t" style="left:36.6px;top:741.65px;font-size:6.8px;line-height:7px;color:#555;letter-spacing:-0.13px;">CLOSING DISCLOSURE</span>
<span class="t" style="left:433.7px;top:741.65px;font-size:6.8px;line-height:7px;color:#555;letter-spacing:0.005px;">PAGE 1 OF 5 • LOAN ID #</span>
</div>
</div>
</div></body></html>
